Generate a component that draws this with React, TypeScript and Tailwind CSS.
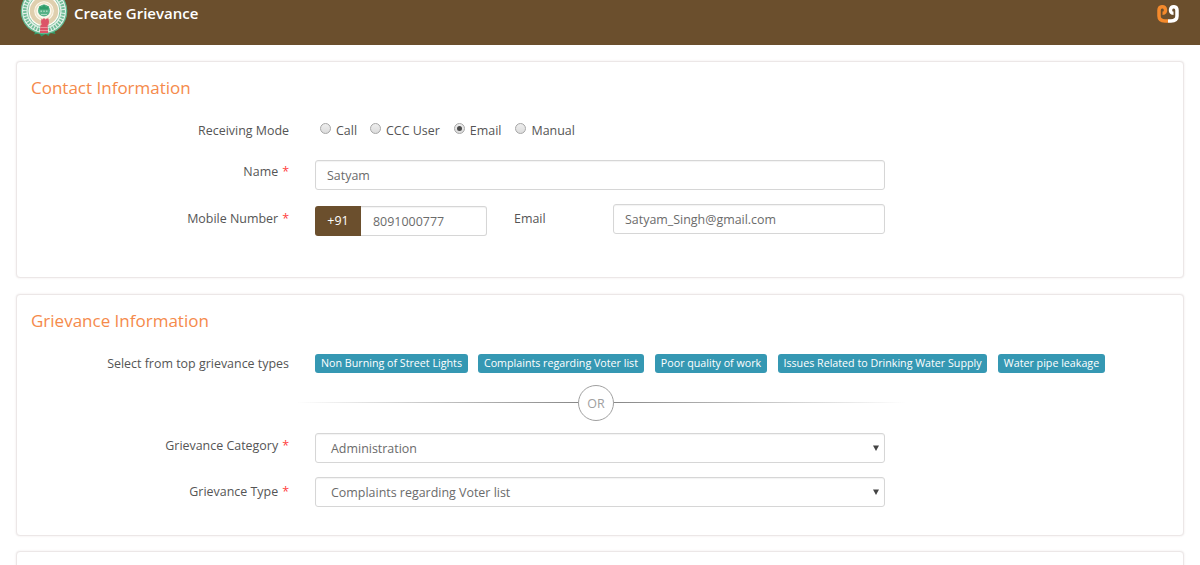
import React from 'react';

const modes = [
  { name: 'Call', gap: 'mr-[13px]' },
  { name: 'CCC User', gap: 'mr-[14px]' },
  { name: 'Email', gap: 'mr-[14px]' },
  { name: 'Manual', gap: '' },
];

const topTypes = [
  { name: 'Non Burning of Street Lights', width: 'w-[153px] mr-[10px]' },
  { name: 'Complaints regarding Voter list', width: 'w-[166px] mr-[11px]' },
  { name: 'Poor quality of work', width: 'w-[112px] mr-[11px]' },
  { name: 'Issues Related to Drinking Water Supply', width: 'w-[209px] mr-[11px]' },
  { name: 'Water pipe leakage', width: 'w-[107px]' },
];

function Emblem() {
  return (
    <svg width="48" height="50" viewBox="0 0 48 50" className="block">
      <path d="M11 41.500l4.500 2.200-1.500 2.800 5-1 2.500 3 4-2.500 3 2 1.500-3 5.500 1-1-2.500 3.500-2z" fill="#2f9a66" />
      <circle cx="24" cy="23" r="23.300" fill="#62b990" />
      <circle cx="24" cy="23" r="22" fill="#e3f0e8" />
      <circle cx="24" cy="23" r="19.200" fill="none" stroke="#6fbd97" strokeWidth="3.400" strokeDasharray="1.800 1.100" />
      <circle cx="24" cy="23" r="16" fill="#fdfcf6" stroke="#8fcbaa" strokeWidth="1" />
      <circle cx="24" cy="23" r="12" fill="#fcf9ef" stroke="#dfcfae" strokeWidth="4.400" />
      <circle cx="24" cy="23" r="8.200" fill="none" stroke="#efe3c8" strokeWidth="1.400" />
      <circle cx="24" cy="22.500" r="6" fill="#56b287" />
      <path d="M19.500 18l2.500 1 2-2.500 2 2.500 2.500-1v3.500h-9z" fill="#2f9d69" />
      <path d="M20.500 22.500h1.500v1.500h-1.500zM23.300 22.500h1.500v1.500h-1.500zM26 22.500h1.500v1.500H26zM21 26h6v1h-6z" fill="#a9d8bf" />
      <path d="M21 30.500l1.500 1 1.500-1.500 1.500 1.500 1.500-1h1.500l.5 3.500-.8 3.500h-6.400l-.8-3.500.5-3.500z" fill="#dc5468" />
      <path d="M20.500 37h7l.7 8h-8.400z" fill="#dc5468" />
      <path d="M20.300 39.500h7.400M20 42.500h8" stroke="#f0a3ab" strokeWidth=".8" />
    </svg>
  );
}

function BrandMark() {
  return (
    <svg width="22" height="20" viewBox="0 0 22 20" fill="none" strokeWidth="3.500" strokeLinejoin="round" className="block">
      <path d="M5.500 9.300C8 9.300 8.800 7.600 8.400 5.300 7.700 1.700 2 1.700 2 6.300V12C2 15.600 4.400 16.900 8 16.900H11" stroke="#f58a2c" />
      <path d="M16.500 9.300C14 9.300 13.200 7.600 13.600 5.300 14.300 1.700 20 1.700 20 6.300V12C20 15.600 17.600 16.900 14 16.900H11" stroke="#fff" />
    </svg>
  );
}

function Label({ children, required, className = '' }: { children: React.ReactNode; required?: boolean; className?: string }) {
  return (
    <div className={`w-[272px] shrink-0 text-right leading-5 text-[#555] ${className}`}>
      {children}
      {required && <span className="ml-[4px] text-[#ff4040]">*</span>}
    </div>
  );
}

const box = 'h-[30px] rounded-[3px] border border-[#d6d6d6] bg-white text-[#6b6b6b] shadow-[inset_0_1px_1px_rgba(0,0,0,0.05)] outline-none';

function Panel({ title, className, children }: { title?: string; className: string; children?: React.ReactNode }) {
  return (
    <section className={`rounded-[4px] border border-[#ece7e7] bg-white shadow-[0_0_2px_rgba(120,90,90,0.16)] ${className}`}>
      {title && <h2 className="ml-[14px] mt-[13px] h-[26px] text-[17px] leading-[25px] text-[#f58a4b]">{title}</h2>}
      {children}
    </section>
  );
}

function Select({ value }: { value: string }) {
  return (
    <div className={`${box} ml-[26px] flex w-[570px] items-center justify-between pl-[15px] pr-[5px]`}>
      <span className="pt-[3px]">{value}</span>
      <svg width="6" height="6" viewBox="0 0 6 6">
        <path d="M0 0.500h6L3 6z" fill="#444" />
      </svg>
    </div>
  );
}

export default function App() {
  return (
    <div className="h-[565px] overflow-hidden bg-white font-['Open_Sans',sans-serif] text-[12.450px]">
      <header className="flex h-[45px] items-start justify-between bg-[#6b4f2d] pl-[20px] pr-[21px]">
        <div className="flex">
          <div className="-mt-[12px]">
            <Emblem />
          </div>
          <h1 className="ml-[6px] mt-[3px] text-[15px] font-semibold leading-5 text-white">Create Grievance</h1>
        </div>
        <div className="mt-[4px]">
          <BrandMark />
        </div>
      </header>

      <main className="px-4 pt-4">
        <Panel title="Contact Information" className="h-[217px]">
          <div className="mt-[20px] flex h-[39px]">
            <Label>Receiving Mode</Label>
            <div className="ml-[31px] flex h-5 text-[#555]">
              {modes.map((m) => (
                <label key={m.name} className={`flex leading-5 ${m.gap}`}>
                  <span className="mr-[5px] mt-[2px] flex h-[11px] w-[11px] items-center justify-center rounded-full border border-[#a6a6a6] bg-gradient-to-b from-[#eee] to-[#dcdcdc]">
                    {m.name === 'Email' && <span className="h-[5px] w-[5px] rounded-full bg-[#4a4a4a]" />}
                  </span>
                  {m.name}
                </label>
              ))}
            </div>
          </div>
          <div className="flex h-[44px]">
            <Label required className="mt-[2px]">Name</Label>
            <input readOnly value="Satyam" className={`${box} ml-[26px] w-[570px] px-[11px]`} />
          </div>
          <div className="flex h-[44px]">
            <Label required className="mt-[5px]">Mobile Number</Label>
            <div className="ml-[26px] mt-[2px] flex h-[30px] w-[172px]">
              <span className="flex w-[46px] items-center justify-center rounded-l-[3px] bg-[#6b4f2d] text-white">+91</span>
              <input readOnly value="8091000777" className={`${box} w-[126px] rounded-l-none border-l-0 px-[12px]`} />
            </div>
            <span className="ml-[27px] mt-[5px] w-[99px] leading-5 text-[#555]">Email</span>
            <input readOnly value="Satyam_Singh@gmail.com" className={`${box} w-[272px] px-[11px]`} />
          </div>
        </Panel>

        <Panel title="Grievance Information" className="mt-4 h-[242px]">
          <div className="mt-[19px] flex h-[32px]">
            <Label className="mt-px">Select from top grievance types</Label>
            <div className="ml-[26px] flex">
              {topTypes.map((t) => (
                <span key={t.name} className={`mt-px flex h-[19px] items-center justify-center whitespace-nowrap rounded-[3px] bg-[#3598b3] text-[10.700px] font-medium text-white ${t.width}`}>
                  {t.name}
                </span>
              ))}
            </div>
          </div>
          <div className="ml-[279px] flex h-[36px] w-[610px] items-center">
            <div className="-mt-px h-px w-[282px] bg-gradient-to-r from-transparent to-[#888]" />
            <div className="flex h-[36px] w-[36px] items-center justify-center rounded-full border border-[#a0a0a0] pt-[3px] text-[#a0a0a0]">OR</div>
            <div className="-mt-px h-px flex-1 bg-gradient-to-r from-[#888] to-transparent" />
          </div>
          <div className="mt-[12px] flex h-[44px]">
            <Label required className="mt-[3px]">Grievance Category</Label>
            <Select value="Administration" />
          </div>
          <div className="flex h-[44px]">
            <Label required className="mt-[5px]">Grievance Type</Label>
            <Select value="Complaints regarding Voter list" />
          </div>
        </Panel>

        <Panel className="mt-[15px] h-[60px]" />
      </main>
    </div>
  );
}
